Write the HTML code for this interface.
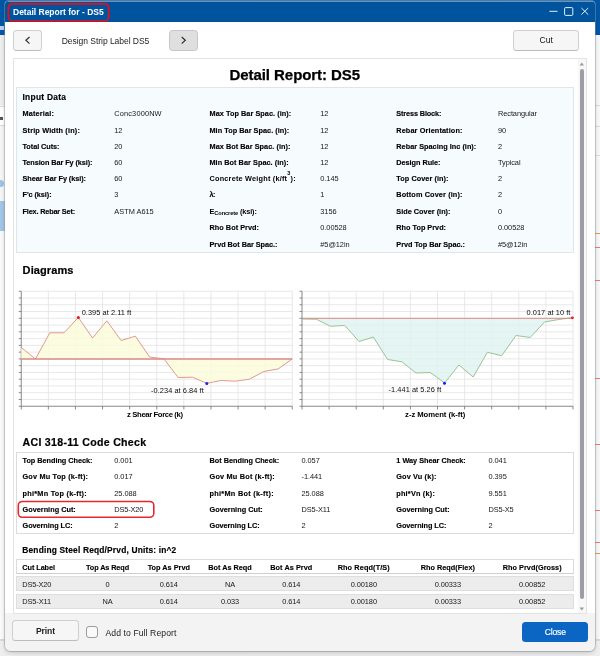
<!DOCTYPE html>
<html><head><meta charset="utf-8"><title>Detail Report for - DS5</title>
<style>
html,body{margin:0;padding:0;}
body{width:600px;height:656px;position:relative;overflow:hidden;background:#fff;font-family:"Liberation Sans",Arial,sans-serif;}
#root{position:absolute;left:0;top:0;width:600px;height:656px;will-change:transform;}
.t{position:absolute;white-space:nowrap;line-height:1;}
#dlg{position:absolute;left:4.6px;top:0.6px;width:590.7px;height:650px;background:#f3f3f3;border-radius:3.5px 3.5px 5.5px 5.5px;box-shadow:0 1.5px 5px rgba(0,0,0,0.17),0 0 0 0.7px rgba(150,165,180,0.7);overflow:hidden}
#tb{position:absolute;left:0;top:0;width:100%;height:21.6px;background:#00549e}
#dlg::after{content:"";position:absolute;left:0;top:21.6px;width:100%;height:591.2px;background:#fff}
.btn{position:absolute;box-sizing:border-box;background:#f6f6f6;border:1px solid #cfcfcf;border-bottom-color:#bdbdbd;border-radius:3.5px}
#panel{position:absolute;left:13px;top:58px;width:574px;height:555.5px;background:#fff;border:1px solid #e3e3e3;box-sizing:border-box}
</style></head><body>
<div id="root">
<div style="position:absolute;left:0;top:0;width:600px;height:35.4px;background:#0057a6"></div>
<div style="position:absolute;left:0;top:35.4px;width:600px;height:621px;background:#f6f6f6"></div>
<div style="position:absolute;left:0;top:35.4px;width:6px;height:70px;background:#eeeeee"></div>
<div style="position:absolute;left:0;top:105.5px;width:6px;height:20px;background:#fff;border-top:1px solid #dcdcdc;border-bottom:1px solid #dcdcdc;box-sizing:border-box"></div>
<div style="position:absolute;left:0;top:117px;width:2.5px;height:3px;background:#555"></div>
<div style="position:absolute;left:0;top:25.5px;width:3.5px;height:4px;background:#b9d2ea"></div>
<div style="position:absolute;left:-3.5px;top:179.5px;width:7px;height:7px;border-radius:50%;background:#9ec4e8"></div>
<div style="position:absolute;left:0;top:201px;width:6px;height:29.5px;background:#a4c6e6"></div>
<div style="position:absolute;left:0;top:230.5px;width:6px;height:409px;background:#fafafa"></div>
<div style="position:absolute;left:0;top:639px;width:600px;height:2px;background:#dadada"></div>
<div style="position:absolute;left:0;top:641px;width:600px;height:15px;background:#efefef"></div>
<div style="position:absolute;left:594px;top:35.4px;width:6px;height:603.6px;background:#f8f8f8"></div>
<div style="position:absolute;left:595px;top:233.3px;width:5px;height:1.2px;background:#dc9a58"></div>
<div style="position:absolute;left:595px;top:246.9px;width:5px;height:1.2px;background:#e87a78"></div>
<div style="position:absolute;left:595px;top:279.8px;width:5px;height:1.2px;background:#e87a78"></div>
<div style="position:absolute;left:595px;top:378px;width:5px;height:1.2px;background:#e87a78"></div>
<div style="position:absolute;left:595px;top:444.1px;width:5px;height:1.2px;background:#e87a78"></div>
<div style="position:absolute;left:595px;top:509.9px;width:5px;height:1.2px;background:#e87a78"></div>
<div style="position:absolute;left:595px;top:542.3px;width:5px;height:1.2px;background:#e87a78"></div>
<div style="position:absolute;left:595px;top:552.6px;width:5px;height:1.2px;background:#dc9a58"></div>
<div style="position:absolute;left:595px;top:105px;width:5px;height:1px;background:#dcdcdc"></div>
<div style="position:absolute;left:595px;top:126px;width:5px;height:1px;background:#dcdcdc"></div>
<div style="position:absolute;left:595px;top:155px;width:5px;height:1px;background:#dcdcdc"></div>
<div id="dlg">
<div id="tb"></div>
<div style="position:absolute;left:3px;top:0;width:585px;height:1px;background:rgba(255,255,255,0.38)"></div>
</div>
<svg style="position:absolute;left:0;top:0" width="120" height="24"><rect x="8.4" y="3.8" width="100.3" height="17.2" rx="4" fill="none" stroke="#ee0a17" stroke-width="1.7"/></svg>
<span class="t" style="left:13.00px;top:8.00px;font-size:8.5px;font-weight:bold;color:#fff;">Detail Report for - DS5</span>
<svg style="position:absolute;left:545px;top:3px" width="48" height="16" viewBox="545 3 48 16" fill="none" stroke="#fff" stroke-width="0.9"><path d="M549.3 11.3h8.2"/><rect x="564.6" y="7.6" width="8.2" height="7.8" rx="1"/><path d="M581.4 8l6.8 6.6M588.2 8l-6.8 6.6"/></svg>
<div class="btn" style="left:13px;top:30px;width:29px;height:21px"></div>
<div class="btn" style="left:169px;top:30px;width:29px;height:21px;background:#dfdfdf;border-color:#c6c6ca"></div>
<div class="btn" style="left:513px;top:30px;width:66px;height:21px"></div>
<svg style="position:absolute;left:20px;top:34px" width="190" height="14" viewBox="20 34 190 14" fill="none" stroke="#2e2e2e" stroke-width="1.2" stroke-linecap="butt" stroke-linejoin="miter"><path d="M29.5 37L25.9 40.3l3.6 3.3"/><path d="M181.7 37l3.6 3.3-3.6 3.3"/></svg>
<span class="t" style="left:61.75px;top:36.80px;font-size:8.5px;color:#222;letter-spacing:-0.039px;">Design Strip Label DS5</span>
<span class="t" style="left:539.50px;top:36.30px;font-size:8.5px;color:#111;letter-spacing:0.091px;">Cut</span>
<div id="panel"></div>
<div style="position:absolute;left:577.5px;top:59px;width:8.5px;height:553.5px;background:#f8f8f8"></div>
<div style="position:absolute;left:580px;top:68.6px;width:3.8px;height:530.8px;background:#9c9da5;border-radius:2px"></div>
<svg style="position:absolute;left:578px;top:61px" width="8" height="550" viewBox="578 61 8 550"><path d="M579.6 65.6l2.2-3 2.2 3z" fill="#9a9a9a"/><path d="M579.6 607.4l2.2 3 2.2-3z" fill="#9a9a9a"/></svg>
<span class="t" style="left:229.50px;top:66.90px;font-size:15px;font-weight:bold;letter-spacing:-0.061px;-webkit-text-stroke:0.25px #000;">Detail Report: DS5</span>
<div style="position:absolute;left:16px;top:87px;width:558px;height:166px;background:#f6fbfe;border:1px solid #dfe6ea;box-sizing:border-box"></div>
<span class="t" style="left:22.50px;top:92.89px;font-size:8.4px;font-weight:bold;letter-spacing:0.273px;-webkit-text-stroke:0.15px #000;">Input Data</span>
<span class="t" style="left:22.50px;top:109.82px;font-size:7.3px;font-weight:bold;letter-spacing:0.164px;-webkit-text-stroke:0.14px #000;">Material:</span>
<span class="t" style="left:114.30px;top:109.74px;font-size:7.4px;color:#161616;letter-spacing:0.143px;">Conc3000NW</span>
<span class="t" style="left:22.50px;top:126.82px;font-size:7.3px;font-weight:bold;letter-spacing:0.167px;-webkit-text-stroke:0.14px #000;">Strip Width (in):</span>
<span class="t" style="left:114.30px;top:126.74px;font-size:7.4px;color:#161616;letter-spacing:-0.062px;">12</span>
<span class="t" style="left:22.50px;top:142.82px;font-size:7.3px;font-weight:bold;letter-spacing:-0.052px;-webkit-text-stroke:0.14px #000;">Total Cuts:</span>
<span class="t" style="left:114.30px;top:142.74px;font-size:7.4px;color:#161616;letter-spacing:-0.062px;">20</span>
<span class="t" style="left:22.50px;top:158.82px;font-size:7.3px;font-weight:bold;letter-spacing:-0.079px;-webkit-text-stroke:0.14px #000;">Tension Bar Fy (ksi):</span>
<span class="t" style="left:114.30px;top:158.74px;font-size:7.4px;color:#161616;letter-spacing:-0.062px;">60</span>
<span class="t" style="left:22.50px;top:174.82px;font-size:7.3px;font-weight:bold;letter-spacing:-0.053px;-webkit-text-stroke:0.14px #000;">Shear Bar Fy (ksi):</span>
<span class="t" style="left:114.30px;top:174.74px;font-size:7.4px;color:#161616;letter-spacing:-0.062px;">60</span>
<span class="t" style="left:22.50px;top:190.82px;font-size:7.3px;font-weight:bold;letter-spacing:-0.072px;-webkit-text-stroke:0.14px #000;">F'c (ksi):</span>
<span class="t" style="left:114.30px;top:190.74px;font-size:7.4px;color:#161616;">3</span>
<span class="t" style="left:22.50px;top:207.82px;font-size:7.3px;font-weight:bold;letter-spacing:-0.167px;-webkit-text-stroke:0.14px #000;">Flex. Rebar Set:</span>
<span class="t" style="left:114.30px;top:207.74px;font-size:7.4px;color:#161616;">ASTM A615</span>
<span class="t" style="left:209.50px;top:109.82px;font-size:7.3px;font-weight:bold;letter-spacing:0.051px;-webkit-text-stroke:0.14px #000;">Max Top Bar Spac. (in):</span>
<span class="t" style="left:320.30px;top:109.74px;font-size:7.4px;color:#161616;letter-spacing:-0.062px;">12</span>
<span class="t" style="left:209.50px;top:126.82px;font-size:7.3px;font-weight:bold;letter-spacing:0.035px;-webkit-text-stroke:0.14px #000;">Min Top Bar Spac. (in):</span>
<span class="t" style="left:320.30px;top:126.74px;font-size:7.4px;color:#161616;letter-spacing:-0.062px;">12</span>
<span class="t" style="left:209.50px;top:142.82px;font-size:7.3px;font-weight:bold;letter-spacing:0.048px;-webkit-text-stroke:0.14px #000;">Max Bot Bar Spac. (in):</span>
<span class="t" style="left:320.30px;top:142.74px;font-size:7.4px;color:#161616;letter-spacing:-0.062px;">12</span>
<span class="t" style="left:209.50px;top:158.82px;font-size:7.3px;font-weight:bold;letter-spacing:0.043px;-webkit-text-stroke:0.14px #000;">Min Bot Bar Spac. (in):</span>
<span class="t" style="left:320.30px;top:158.74px;font-size:7.4px;color:#161616;letter-spacing:-0.062px;">12</span>
<span class="t" style="left:320.30px;top:174.74px;font-size:7.4px;color:#161616;letter-spacing:-0.056px;">0.145</span>
<span class="t" style="left:209.50px;top:190.82px;font-size:7.3px;font-weight:bold;letter-spacing:-0.495px;-webkit-text-stroke:0.14px #000;">λ:</span>
<span class="t" style="left:320.30px;top:190.74px;font-size:7.4px;color:#161616;">1</span>
<span class="t" style="left:320.30px;top:207.74px;font-size:7.4px;color:#161616;letter-spacing:-0.062px;">3156</span>
<span class="t" style="left:209.50px;top:223.82px;font-size:7.3px;font-weight:bold;letter-spacing:0.033px;-webkit-text-stroke:0.14px #000;">Rho Bot Prvd:</span>
<span class="t" style="left:320.30px;top:223.74px;font-size:7.4px;color:#161616;letter-spacing:-0.057px;">0.00528</span>
<span class="t" style="left:209.50px;top:240.82px;font-size:7.3px;font-weight:bold;letter-spacing:-0.029px;-webkit-text-stroke:0.14px #000;">Prvd Bot Bar Spac.:</span>
<span class="t" style="left:320.30px;top:240.74px;font-size:7.4px;color:#161616;letter-spacing:-0.064px;">#5@12in</span>
<span class="t" style="left:209.5px;top:174.82px;font-size:7.3px;font-weight:bold;color:#000;letter-spacing:0.213px">Concrete Weight (k/ft<span style="font-size:5.5px;position:relative;top:-5.4px;">3</span>):</span>
<span class="t" style="left:209.5px;top:207.82px;font-size:7.3px;font-weight:bold;color:#000;letter-spacing:-0.109px">E<span style="font-size:5.7px;position:relative;top:1px;">Concrete</span> (ksi):</span>
<span class="t" style="left:396.30px;top:109.82px;font-size:7.3px;font-weight:bold;letter-spacing:-0.128px;-webkit-text-stroke:0.14px #000;">Stress Block:</span>
<span class="t" style="left:498.00px;top:109.74px;font-size:7.4px;color:#161616;letter-spacing:-0.082px;">Rectangular</span>
<span class="t" style="left:396.30px;top:126.82px;font-size:7.3px;font-weight:bold;letter-spacing:0.120px;-webkit-text-stroke:0.14px #000;">Rebar Orientation:</span>
<span class="t" style="left:498.00px;top:126.74px;font-size:7.4px;color:#161616;letter-spacing:-0.062px;">90</span>
<span class="t" style="left:396.30px;top:142.82px;font-size:7.3px;font-weight:bold;letter-spacing:0.022px;-webkit-text-stroke:0.14px #000;">Rebar Spacing Inc (in):</span>
<span class="t" style="left:498.00px;top:142.74px;font-size:7.4px;color:#161616;">2</span>
<span class="t" style="left:396.30px;top:158.82px;font-size:7.3px;font-weight:bold;letter-spacing:-0.031px;-webkit-text-stroke:0.14px #000;">Design Rule:</span>
<span class="t" style="left:498.00px;top:158.74px;font-size:7.4px;color:#161616;letter-spacing:-0.076px;">Typical</span>
<span class="t" style="left:396.30px;top:174.82px;font-size:7.3px;font-weight:bold;letter-spacing:0.059px;-webkit-text-stroke:0.14px #000;">Top Cover (in):</span>
<span class="t" style="left:498.00px;top:174.74px;font-size:7.4px;color:#161616;">2</span>
<span class="t" style="left:396.30px;top:190.82px;font-size:7.3px;font-weight:bold;letter-spacing:0.121px;-webkit-text-stroke:0.14px #000;">Bottom Cover (in):</span>
<span class="t" style="left:498.00px;top:190.74px;font-size:7.4px;color:#161616;">2</span>
<span class="t" style="left:396.30px;top:207.82px;font-size:7.3px;font-weight:bold;letter-spacing:0.019px;-webkit-text-stroke:0.14px #000;">Side Cover (in):</span>
<span class="t" style="left:498.00px;top:207.74px;font-size:7.4px;color:#161616;">0</span>
<span class="t" style="left:396.30px;top:223.82px;font-size:7.3px;font-weight:bold;-webkit-text-stroke:0.14px #000;">Rho Top Prvd:</span>
<span class="t" style="left:498.00px;top:223.74px;font-size:7.4px;color:#161616;letter-spacing:-0.057px;">0.00528</span>
<span class="t" style="left:396.30px;top:240.82px;font-size:7.3px;font-weight:bold;letter-spacing:-0.025px;-webkit-text-stroke:0.14px #000;">Prvd Top Bar Spac.:</span>
<span class="t" style="left:498.00px;top:240.74px;font-size:7.4px;color:#161616;letter-spacing:-0.064px;">#5@12in</span>
<span class="t" style="left:22.60px;top:264.69px;font-size:11px;font-weight:bold;letter-spacing:0.108px;-webkit-text-stroke:0.2px #000;">Diagrams</span>
<svg style="position:absolute;left:0;top:280px" width="600" height="140" viewBox="0 280 600 140"><path d="M48.35 291.25V406.25M75.45 291.25V406.25M102.55 291.25V406.25M129.65 291.25V406.25M156.75 291.25V406.25M183.85 291.25V406.25M210.95 291.25V406.25M238.05 291.25V406.25M265.15 291.25V406.25M292.25 291.25V406.25M21.25 291.25H292.25M21.25 298.01H292.25M21.25 304.78H292.25M21.25 311.55H292.25M21.25 318.31H292.25M21.25 325.07H292.25M21.25 331.84H292.25M21.25 338.61H292.25M21.25 345.37H292.25M21.25 352.13H292.25M21.25 358.90H292.25M21.25 365.66H292.25M21.25 372.43H292.25M21.25 379.19H292.25M21.25 385.96H292.25M21.25 392.73H292.25M21.25 399.49H292.25" stroke="#e2e2e2" stroke-width="0.8" fill="none"/><path d="M21.25 291.25V409.45M18.75 406.25H292.25M18.75 291.25H21.25M18.75 298.01H21.25M18.75 304.78H21.25M18.75 311.55H21.25M18.75 318.31H21.25M18.75 325.07H21.25M18.75 331.84H21.25M18.75 338.61H21.25M18.75 345.37H21.25M18.75 352.13H21.25M18.75 358.90H21.25M18.75 365.66H21.25M18.75 372.43H21.25M18.75 379.19H21.25M18.75 385.96H21.25M18.75 392.73H21.25M18.75 399.49H21.25M48.35 406.25V409.45M75.45 406.25V409.45M102.55 406.25V409.45M129.65 406.25V409.45M156.75 406.25V409.45M183.85 406.25V409.45M210.95 406.25V409.45M238.05 406.25V409.45M265.15 406.25V409.45M292.25 406.25V409.45" stroke="#7c7c7c" stroke-width="0.9" fill="none"/><path d="M21.25 358.90 L21.25 347.50 L35.51 359.00 L49.78 332.80 L64.04 332.80 L78.30 317.50 L92.57 338.00 L106.83 320.80 L121.09 340.50 L135.36 336.20 L149.62 357.00 L163.88 358.80 L178.14 377.50 L192.41 377.20 L206.67 383.30 L220.93 380.50 L235.20 381.20 L249.46 379.20 L263.72 371.50 L277.99 369.00 L292.25 359.00 L292.25 358.90Z" fill="rgba(252,251,218,0.85)" stroke="none"/><path d="M21.25 347.50 L35.51 359.00 L49.78 332.80 L64.04 332.80 L78.30 317.50 L92.57 338.00 L106.83 320.80 L121.09 340.50 L135.36 336.20 L149.62 357.00 L163.88 358.80 L178.14 377.50 L192.41 377.20 L206.67 383.30 L220.93 380.50 L235.20 381.20 L249.46 379.20 L263.72 371.50 L277.99 369.00 L292.25 359.00" fill="none" stroke="#dc8f88" stroke-width="0.9" stroke-linejoin="round"/><path d="M21.25 358.90H292.25" stroke="#dc8a85" stroke-width="1.5" fill="none"/><path d="M329.10 291.25V406.25M356.20 291.25V406.25M383.30 291.25V406.25M410.40 291.25V406.25M437.50 291.25V406.25M464.60 291.25V406.25M491.70 291.25V406.25M518.80 291.25V406.25M545.90 291.25V406.25M573.00 291.25V406.25M302.00 291.25H573.00M302.00 298.01H573.00M302.00 304.78H573.00M302.00 311.55H573.00M302.00 318.31H573.00M302.00 325.07H573.00M302.00 331.84H573.00M302.00 338.61H573.00M302.00 345.37H573.00M302.00 352.13H573.00M302.00 358.90H573.00M302.00 365.66H573.00M302.00 372.43H573.00M302.00 379.19H573.00M302.00 385.96H573.00M302.00 392.73H573.00M302.00 399.49H573.00" stroke="#e2e2e2" stroke-width="0.8" fill="none"/><path d="M302.00 291.25V409.45M299.50 406.25H573.00M299.50 291.25H302.00M299.50 298.01H302.00M299.50 304.78H302.00M299.50 311.55H302.00M299.50 318.31H302.00M299.50 325.07H302.00M299.50 331.84H302.00M299.50 338.61H302.00M299.50 345.37H302.00M299.50 352.13H302.00M299.50 358.90H302.00M299.50 365.66H302.00M299.50 372.43H302.00M299.50 379.19H302.00M299.50 385.96H302.00M299.50 392.73H302.00M299.50 399.49H302.00M329.10 406.25V409.45M356.20 406.25V409.45M383.30 406.25V409.45M410.40 406.25V409.45M437.50 406.25V409.45M464.60 406.25V409.45M491.70 406.25V409.45M518.80 406.25V409.45M545.90 406.25V409.45M573.00 406.25V409.45" stroke="#7c7c7c" stroke-width="0.9" fill="none"/><path d="M302.00 318.31 L302.00 319.00 L316.26 319.25 L330.53 326.25 L344.79 325.50 L359.05 341.50 L373.32 337.00 L387.58 359.50 L401.84 361.75 L416.11 373.00 L430.37 372.50 L444.63 383.00 L458.89 365.00 L473.16 377.00 L487.42 352.25 L501.68 355.75 L515.95 335.50 L530.21 337.50 L544.47 322.00 L558.74 319.50 L573.00 317.50 L573.00 318.31Z" fill="rgba(222,243,240,0.8)" stroke="none"/><path d="M302.00 319.00 L316.26 319.25 L330.53 326.25 L344.79 325.50 L359.05 341.50 L373.32 337.00 L387.58 359.50 L401.84 361.75 L416.11 373.00 L430.37 372.50 L444.63 383.00 L458.89 365.00 L473.16 377.00 L487.42 352.25 L501.68 355.75 L515.95 335.50 L530.21 337.50 L544.47 322.00 L558.74 319.50 L573.00 317.50" fill="none" stroke="#8dbd8c" stroke-width="0.9" stroke-linejoin="round"/><path d="M302.00 318.31H573.00" stroke="#d98a84" stroke-width="1.0" fill="none"/><circle cx="78.3" cy="317.5" r="1.5" fill="#f01020"/><circle cx="206.8" cy="383.4" r="1.5" fill="#1020f0"/><circle cx="572.4" cy="317.8" r="1.4" fill="#f01020"/><circle cx="444.5" cy="383.2" r="1.5" fill="#1020f0"/></svg>
<span class="t" style="left:81.70px;top:308.74px;font-size:7.4px;color:#0c0c0c;letter-spacing:0.049px;">0.395 at 2.11 ft</span>
<span class="t" style="left:151.00px;top:386.74px;font-size:7.4px;color:#0c0c0c;letter-spacing:0.057px;">-0.234 at 6.84 ft</span>
<span class="t" style="left:526.50px;top:308.74px;font-size:7.4px;color:#0c0c0c;letter-spacing:0.057px;">0.017 at 10 ft</span>
<span class="t" style="left:388.50px;top:385.74px;font-size:7.4px;color:#0c0c0c;letter-spacing:0.057px;">-1.441 at 5.26 ft</span>
<span class="t" style="left:127.10px;top:411.48px;font-size:7.7px;font-weight:bold;letter-spacing:-0.379px;">z Shear Force (k)</span>
<span class="t" style="left:405.10px;top:411.48px;font-size:7.7px;font-weight:bold;letter-spacing:-0.057px;">z-z Moment (k-ft)</span>
<span class="t" style="left:22.50px;top:437.03px;font-size:10.6px;font-weight:bold;letter-spacing:0.294px;-webkit-text-stroke:0.2px #000;">ACI 318-11 Code Check</span>
<div style="position:absolute;left:16px;top:452px;width:558px;height:82px;background:#fff;border:1px solid #dcdcdc;box-sizing:border-box"></div>
<span class="t" style="left:22.50px;top:456.82px;font-size:7.3px;font-weight:bold;letter-spacing:-0.024px;-webkit-text-stroke:0.14px #000;">Top Bending Check:</span>
<span class="t" style="left:114.30px;top:456.74px;font-size:7.4px;color:#161616;letter-spacing:-0.056px;">0.001</span>
<span class="t" style="left:209.50px;top:456.82px;font-size:7.3px;font-weight:bold;-webkit-text-stroke:0.14px #000;">Bot Bending Check:</span>
<span class="t" style="left:301.50px;top:456.74px;font-size:7.4px;color:#161616;letter-spacing:-0.056px;">0.057</span>
<span class="t" style="left:396.30px;top:456.82px;font-size:7.3px;font-weight:bold;-webkit-text-stroke:0.14px #000;">1 Way Shear Check:</span>
<span class="t" style="left:488.50px;top:456.74px;font-size:7.4px;color:#161616;letter-spacing:-0.056px;">0.041</span>
<span class="t" style="left:22.50px;top:472.82px;font-size:7.3px;font-weight:bold;letter-spacing:0.191px;-webkit-text-stroke:0.14px #000;">Gov Mu Top (k-ft):</span>
<span class="t" style="left:114.30px;top:472.74px;font-size:7.4px;color:#161616;letter-spacing:-0.056px;">0.017</span>
<span class="t" style="left:209.50px;top:472.82px;font-size:7.3px;font-weight:bold;letter-spacing:0.215px;-webkit-text-stroke:0.14px #000;">Gov Mu Bot (k-ft):</span>
<span class="t" style="left:301.50px;top:472.74px;font-size:7.4px;color:#161616;letter-spacing:-0.052px;">-1.441</span>
<span class="t" style="left:396.30px;top:472.82px;font-size:7.3px;font-weight:bold;letter-spacing:0.144px;-webkit-text-stroke:0.14px #000;">Gov Vu (k):</span>
<span class="t" style="left:488.50px;top:472.74px;font-size:7.4px;color:#161616;letter-spacing:-0.056px;">0.395</span>
<span class="t" style="left:22.50px;top:489.82px;font-size:7.3px;font-weight:bold;letter-spacing:0.257px;-webkit-text-stroke:0.14px #000;">phi*Mn Top (k-ft):</span>
<span class="t" style="left:114.30px;top:489.74px;font-size:7.4px;color:#161616;letter-spacing:-0.057px;">25.088</span>
<span class="t" style="left:209.50px;top:489.82px;font-size:7.3px;font-weight:bold;letter-spacing:0.295px;-webkit-text-stroke:0.14px #000;">phi*Mn Bot (k-ft):</span>
<span class="t" style="left:301.50px;top:489.74px;font-size:7.4px;color:#161616;letter-spacing:-0.057px;">25.088</span>
<span class="t" style="left:396.30px;top:489.82px;font-size:7.3px;font-weight:bold;letter-spacing:0.205px;-webkit-text-stroke:0.14px #000;">phi*Vn (k):</span>
<span class="t" style="left:488.50px;top:489.74px;font-size:7.4px;color:#161616;letter-spacing:-0.056px;">9.551</span>
<span class="t" style="left:22.50px;top:505.82px;font-size:7.3px;font-weight:bold;letter-spacing:0.013px;-webkit-text-stroke:0.14px #000;">Governing Cut:</span>
<span class="t" style="left:114.30px;top:505.74px;font-size:7.4px;color:#161616;letter-spacing:-0.147px;">DS5-X20</span>
<span class="t" style="left:209.50px;top:505.82px;font-size:7.3px;font-weight:bold;letter-spacing:0.013px;-webkit-text-stroke:0.14px #000;">Governing Cut:</span>
<span class="t" style="left:301.50px;top:505.74px;font-size:7.4px;color:#161616;letter-spacing:-0.104px;">DS5-X11</span>
<span class="t" style="left:396.30px;top:505.82px;font-size:7.3px;font-weight:bold;letter-spacing:0.013px;-webkit-text-stroke:0.14px #000;">Governing Cut:</span>
<span class="t" style="left:488.50px;top:505.74px;font-size:7.4px;color:#161616;letter-spacing:-0.152px;">DS5-X5</span>
<span class="t" style="left:22.50px;top:521.82px;font-size:7.3px;font-weight:bold;letter-spacing:-0.046px;-webkit-text-stroke:0.14px #000;">Governing LC:</span>
<span class="t" style="left:114.30px;top:521.74px;font-size:7.4px;color:#161616;">2</span>
<span class="t" style="left:209.50px;top:521.82px;font-size:7.3px;font-weight:bold;letter-spacing:-0.046px;-webkit-text-stroke:0.14px #000;">Governing LC:</span>
<span class="t" style="left:301.50px;top:521.74px;font-size:7.4px;color:#161616;">2</span>
<span class="t" style="left:396.30px;top:521.82px;font-size:7.3px;font-weight:bold;letter-spacing:-0.046px;-webkit-text-stroke:0.14px #000;">Governing LC:</span>
<span class="t" style="left:488.50px;top:521.74px;font-size:7.4px;color:#161616;">2</span>
<svg style="position:absolute;left:10px;top:495px" width="160" height="30" viewBox="10 495 160 30"><rect x="18.3" y="501.5" width="135.5" height="15.8" rx="4" fill="none" stroke="#e8262d" stroke-width="1.6"/></svg>
<span class="t" style="left:22.30px;top:545.89px;font-size:8.4px;font-weight:bold;letter-spacing:0.178px;-webkit-text-stroke:0.15px #000;">Bending Steel Reqd/Prvd, Units: in^2</span>
<div style="position:absolute;left:16px;top:559px;width:558px;height:14.6px;border:1px solid #dcdcdc;border-bottom-color:#cfcfcf;box-sizing:border-box;background:#fff"></div>
<div style="position:absolute;left:16px;top:576.4px;width:558px;height:15px;background:#ececec;border:1px solid #dedede;box-sizing:border-box"></div>
<div style="position:absolute;left:16px;top:594px;width:558px;height:15px;background:#ececec;border:1px solid #dedede;box-sizing:border-box"></div>
<span class="t" style="left:22.30px;top:563.82px;font-size:7.3px;font-weight:bold;letter-spacing:-0.062px;-webkit-text-stroke:0.14px #000;">Cut Label</span>
<span class="t" style="left:86.00px;top:563.82px;font-size:7.3px;font-weight:bold;letter-spacing:-0.109px;-webkit-text-stroke:0.14px #000;">Top As Reqd</span>
<span class="t" style="left:147.65px;top:563.82px;font-size:7.3px;font-weight:bold;letter-spacing:0.011px;-webkit-text-stroke:0.14px #000;">Top As Prvd</span>
<span class="t" style="left:208.30px;top:563.82px;font-size:7.3px;font-weight:bold;letter-spacing:-0.012px;-webkit-text-stroke:0.14px #000;">Bot As Reqd</span>
<span class="t" style="left:270.30px;top:563.82px;font-size:7.3px;font-weight:bold;letter-spacing:0.045px;-webkit-text-stroke:0.14px #000;">Bot As Prvd</span>
<span class="t" style="left:337.65px;top:563.82px;font-size:7.3px;font-weight:bold;letter-spacing:0.124px;-webkit-text-stroke:0.14px #000;">Rho Reqd(T/S)</span>
<span class="t" style="left:420.65px;top:563.82px;font-size:7.3px;font-weight:bold;letter-spacing:0.026px;-webkit-text-stroke:0.14px #000;">Rho Reqd(Flex)</span>
<span class="t" style="left:502.70px;top:563.82px;font-size:7.3px;font-weight:bold;letter-spacing:0.040px;-webkit-text-stroke:0.14px #000;">Rho Prvd(Gross)</span>
<span class="t" style="left:22.30px;top:580.74px;font-size:7.4px;color:#161616;letter-spacing:-0.147px;">DS5-X20</span>
<span class="t" style="left:105.44px;top:580.74px;font-size:7.4px;color:#161616;">0</span>
<span class="t" style="left:159.68px;top:580.74px;font-size:7.4px;color:#161616;letter-spacing:-0.056px;">0.614</span>
<span class="t" style="left:224.94px;top:580.74px;font-size:7.4px;color:#161616;letter-spacing:-0.077px;">NA</span>
<span class="t" style="left:282.18px;top:580.74px;font-size:7.4px;color:#161616;letter-spacing:-0.056px;">0.614</span>
<span class="t" style="left:350.63px;top:580.74px;font-size:7.4px;color:#161616;letter-spacing:-0.057px;">0.00180</span>
<span class="t" style="left:434.63px;top:580.74px;font-size:7.4px;color:#161616;letter-spacing:-0.057px;">0.00333</span>
<span class="t" style="left:519.03px;top:580.74px;font-size:7.4px;color:#161616;letter-spacing:-0.057px;">0.00852</span>
<span class="t" style="left:22.30px;top:597.74px;font-size:7.4px;color:#161616;letter-spacing:-0.104px;">DS5-X11</span>
<span class="t" style="left:102.44px;top:597.74px;font-size:7.4px;color:#161616;letter-spacing:-0.077px;">NA</span>
<span class="t" style="left:159.68px;top:597.74px;font-size:7.4px;color:#161616;letter-spacing:-0.056px;">0.614</span>
<span class="t" style="left:220.88px;top:597.74px;font-size:7.4px;color:#161616;letter-spacing:-0.056px;">0.033</span>
<span class="t" style="left:282.18px;top:597.74px;font-size:7.4px;color:#161616;letter-spacing:-0.056px;">0.614</span>
<span class="t" style="left:350.63px;top:597.74px;font-size:7.4px;color:#161616;letter-spacing:-0.057px;">0.00180</span>
<span class="t" style="left:434.63px;top:597.74px;font-size:7.4px;color:#161616;letter-spacing:-0.057px;">0.00333</span>
<span class="t" style="left:519.03px;top:597.74px;font-size:7.4px;color:#161616;letter-spacing:-0.057px;">0.00852</span>
<div class="btn" style="left:12px;top:620px;width:67px;height:21px"></div>
<span class="t" style="left:36.00px;top:626.72px;font-size:8.6px;font-weight:bold;color:#222;letter-spacing:-0.118px;">Print</span>
<div style="position:absolute;left:86px;top:626px;width:12px;height:12px;border:1px solid #9c9c9c;border-radius:3px;box-sizing:border-box;background:#f9f9f9"></div>
<span class="t" style="left:105.50px;top:628.52px;font-size:8.6px;color:#222;letter-spacing:0.094px;">Add to Full Report</span>
<div style="position:absolute;left:522.3px;top:622px;width:66px;height:19.7px;background:#0a66c2;border-radius:3.5px"></div>
<span class="t" style="left:544.80px;top:628.32px;font-size:8.6px;color:#fff;letter-spacing:-0.197px;-webkit-text-stroke:0.15px #fff;">Close</span>
</div>
</body></html>
